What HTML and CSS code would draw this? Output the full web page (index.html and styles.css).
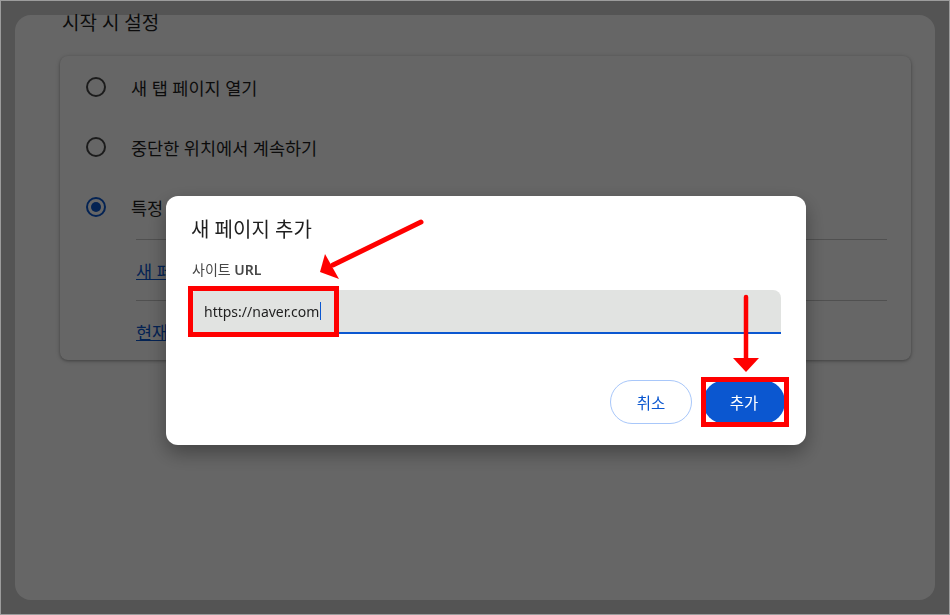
FILE: index.html
```html
<!DOCTYPE html>
<html lang="ko">
<head>
    <meta charset="UTF-8">
    <meta name="viewport" content="width=device-width, initial-scale=1.0">
    <title>설정 - 시작 시</title>
    <link rel="stylesheet" href="styles.css">
</head>
<body>
<div class="page">
    <section class="section">
        <h2 class="section-title">시작 시 설정</h2>
        <div class="card">
            <div class="radio-row">
                <span class="radio"></span>
                <span class="radio-label">새 탭 페이지 열기</span>
            </div>
            <div class="radio-row">
                <span class="radio"></span>
                <span class="radio-label">중단한 위치에서 계속하기</span>
            </div>
            <div class="radio-row">
                <span class="radio checked"></span>
                <span class="radio-label">특정 페이지 또는 페이지 모음 열기</span>
            </div>
            <div class="link-row first"><a href="#">새 페이지 추가</a></div>
            <div class="link-row"><a href="#">현재 페이지 사용</a></div>
        </div>
    </section>
</div>

<div class="scrim">
    <div class="dialog">
        <h3 class="dialog-title">새 페이지 추가</h3>
        <label class="field-label" for="url">사이트 <b>URL</b></label>
        <div class="field">
            <span class="field-value">https://naver.com</span><span class="caret"></span>
        </div>
        <div class="buttons">
            <button class="btn btn-cancel">취소</button>
            <button class="btn btn-action">추가</button>
        </div>
    </div>
</div>

<!-- red annotation marks -->
<svg class="marks" width="950" height="615" viewBox="0 0 950 615">
    <rect x="190.5" y="288.5" width="146" height="46" fill="none" stroke="#ff0000" stroke-width="5"/>
    <rect x="703.5" y="379.5" width="83" height="45" fill="none" stroke="#ff0000" stroke-width="5"/>
    <line x1="421" y1="222" x2="333" y2="265" stroke="#ff0000" stroke-width="5" stroke-linecap="round"/>
    <polygon points="320,272 325,254 339,279" fill="#ff0000"/>
    <line x1="746" y1="297" x2="746" y2="360" stroke="#ff0000" stroke-width="4.5" stroke-linecap="round"/>
    <polygon points="733,358 759,358 746,372" fill="#ff0000"/>
</svg>
</body>
</html>
```

FILE: styles.css
```css
/* settings page under a dialog */
body {
    font-family: "Noto Sans", "Noto Sans CJK KR", sans-serif;
    background-color: #d3d3d3;
    margin: 0;
    width: 950px;
    height: 615px;
    overflow: hidden;
}
.page {
    padding: 15px;
}
.section {
    background-color: #fff;
    border-radius: 16px;
    width: 920px;
    height: 585px;
}
.section-title {
    font-size: 19px;
    font-weight: normal;
    line-height: 16px;
    color: #1f1f1f;
    margin: 0 0 25px 47px;
}
.card {
    margin-left: 45px;
    width: 851px;
    height: 304px;
    box-sizing: border-box;
    padding-top: 1px;
    border-radius: 8px;
    box-shadow: 0 1px 3px rgba(0, 0, 0, 0.3), 0 1px 6px rgba(0, 0, 0, 0.12);
}
.radio-row {
    display: flex;
    align-items: center;
    height: 60px;
    padding-left: 26px;
}
.radio {
    width: 16px;
    height: 16px;
    border: 2px solid #474747;
    border-radius: 50%;
    margin-right: 25px;
    position: relative;
}
.radio.checked {
    border-color: #0b57d0;
}
.radio.checked::after {
    content: "";
    position: absolute;
    left: 3px;
    top: 3px;
    width: 10px;
    height: 10px;
    border-radius: 50%;
    background-color: #0b57d0;
}
.radio-label {
    font-size: 17.5px;
    color: #1f1f1f;
}
.link-row {
    display: flex;
    align-items: center;
    height: 60px;
    margin: 0 24px 0 76px;
    border-top: 1px solid #c7c7c7;
}
.link-row.first {
    margin-top: 2px;
}
.link-row a {
    font-size: 17.5px;
    color: #0b57d0;
}

/* dialog */
.scrim {
    position: fixed;
    inset: 0;
    box-sizing: border-box;
    border: 1px solid #9c9c9c;
    background-color: rgba(0, 0, 0, 0.6);
    padding: 195px 0 0 165px;
}
.dialog {
    width: 640px;
    height: 249px;
    box-sizing: border-box;
    background-color: #fff;
    border-radius: 12px;
    padding: 21px 24px 0 24px;
    box-shadow: 0 8px 20px rgba(0, 0, 0, 0.35);
}
.dialog-title {
    font-size: 20px;
    font-weight: normal;
    line-height: 26px;
    color: #1f1f1f;
    margin: 0 0 18px 1px;
}
.field-label {
    display: block;
    font-size: 14px;
    line-height: 18px;
    color: #474747;
    margin: 0 0 11px 2px;
}
.field-label b {
    font-weight: 600;
}
.field {
    display: flex;
    align-items: center;
    height: 42px;
    background-color: #e1e3e1;
    border-bottom: 2px solid #0b57d0;
    border-radius: 8px 8px 0 0;
    padding-left: 14px;
    width: 577px;
}
.field-value {
    font-size: 14px;
    color: #1f1f1f;
}
.caret {
    width: 1px;
    height: 18px;
    margin-left: 1px;
    background-color: #0b57d0;
}
.buttons {
    display: flex;
    justify-content: flex-end;
    gap: 11px;
    margin: 46px -3px 0 0;
}
.btn {
    font-family: "Noto Sans", "Noto Sans CJK KR", sans-serif;
    font-size: 15.5px;
    width: 82px;
    height: 44px;
    border-radius: 22px;
    cursor: pointer;
}
.btn-cancel {
    background-color: #fff;
    color: #0b57d0;
    border: 1px solid #a8c7fa;
}
.btn-action {
    background-color: #0b57d0;
    color: #fff;
    border: none;
}
.marks {
    position: fixed;
    left: 0;
    top: 0;
}
```
